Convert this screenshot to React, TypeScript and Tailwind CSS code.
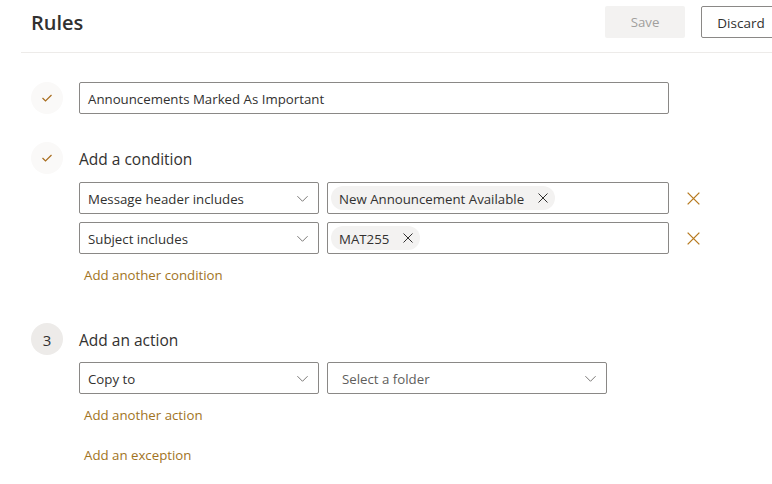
import React from 'react';

const font = { fontFamily: '"Open Sans", "Noto Sans", sans-serif' };

const Check = () => (
  <svg width="12" height="12" viewBox="0 0 12 12" fill="none">
    <path d="M1.5 6 L4.5 9 L10.5 3" stroke="#a86d1e" strokeWidth="1.2" />
  </svg>
);

const Chevron = () => (
  <svg width="13" height="13" viewBox="0 0 14 14" fill="none">
    <path d="M1.5 4.5 L7 10 L12.5 4.5" stroke="#605e5c" strokeWidth="0.9" />
  </svg>
);

const Close = ({ size = 10, color = '#323130' }: { size?: number; color?: string }) => (
  <svg width={size} height={size} viewBox="0 0 10 10" fill="none">
    <path d="M0.5 0.5 L9.5 9.5 M9.5 0.5 L0.5 9.5" stroke={color} strokeWidth="1" />
  </svg>
);

const StepCircle = ({ children, done }: { children: React.ReactNode; done?: boolean }) => (
  <div
    className={`w-8 h-8 rounded-full flex items-center justify-center shrink-0 text-[15px] text-[#323130] ${
      done ? 'bg-[#faf9f8]' : 'bg-[#edebe9] pt-[2px]'
    }`}
  >
    {children}
  </div>
);

const Select = ({ value, width, placeholder }: { value: string; width: string; placeholder?: boolean }) => (
  <div
    className={`${width} h-8 border border-[#8a8886] rounded-[2px] flex items-center justify-between pr-[9px] text-[13.25px] ${
      placeholder ? 'text-[#605e5c] pl-[14px]' : 'text-[#323130] pl-2'
    }`}
  >
    <span className="pt-[3px]">{value}</span>
    <Chevron />
  </div>
);

const Chip = ({ label }: { label: string }) => (
  <div className="h-6 rounded-full bg-[#f3f2f1] flex items-center pl-2 pr-[7px] gap-[14px] text-[13.25px] text-[#323130]">
    <span className="pt-[3px]">{label}</span>
    <Close />
  </div>
);

const ConditionRow = ({ select, chip }: { select: string; chip: string }) => (
  <div className="flex items-center">
    <Select value={select} width="w-[240px]" />
    <div className="ml-2 w-[342px] h-8 border border-[#8a8886] rounded-[2px] flex items-center px-[3px]">
      <Chip label={chip} />
    </div>
    <div className="ml-[17px] w-[14px] flex items-center justify-center">
      <Close size={13} color="#b77a1f" />
    </div>
  </div>
);

const Link = ({ children }: { children: React.ReactNode }) => (
  <div className="h-5 flex items-center pl-[5px] pt-[2px] text-[13.25px] text-[#a1731e]">{children}</div>
);

export default function App() {
  return (
    <div className="w-[772px] h-[484px] overflow-hidden bg-white" style={font}>
      <div className="ml-[21px] w-[760px]">
        <div className="h-[53px] flex items-start pt-[6px] pl-[10px] border-b border-[#edebe9]">
          <h1 className="h-8 flex items-center text-[20px] font-semibold text-[#323130] pt-[1px]">Rules</h1>
          <button className="ml-auto w-20 h-8 bg-[#f3f2f1] text-[13.25px] text-[#a19f9d] rounded-[2px] pt-[2px]">Save</button>
          <button className="ml-4 w-[80px] h-8 border border-[#8a8886] text-[13.5px] font-medium text-[#323130] rounded-[2px] pt-[2px]">
            Discard
          </button>
        </div>

        <div className="pl-[10px] pt-[29px]">
          <div className="flex items-center gap-4">
            <StepCircle done>
              <Check />
            </StepCircle>
            <div className="w-[590px] h-8 border border-[#8a8886] rounded-[2px] flex items-center px-2 pt-[3px] text-[13.25px] text-[#323130]">
              Announcements Marked As Important
            </div>
          </div>

          <div className="mt-7 flex gap-4">
            <StepCircle done>
              <Check />
            </StepCircle>
            <div className="flex flex-col">
              <div className="h-8 flex items-center pt-[3px] text-[15.5px] text-[#323130]">Add a condition</div>
              <div className="mt-2 flex flex-col gap-2">
                <ConditionRow select="Message header includes" chip="New Announcement Available" />
                <ConditionRow select="Subject includes" chip="MAT255" />
              </div>
              <div className="mt-[11px]">
                <Link>Add another condition</Link>
              </div>
            </div>
          </div>

          <div className="mt-[38px] flex gap-4">
            <StepCircle>3</StepCircle>
            <div className="flex flex-col">
              <div className="h-8 flex items-center pt-[3px] text-[15.5px] text-[#323130]">Add an action</div>
              <div className="mt-[7px] flex gap-2">
                <Select value="Copy to" width="w-[240px]" />
                <Select value="Select a folder" width="w-[280px]" placeholder />
              </div>
              <div className="mt-[11px]">
                <Link>Add another action</Link>
              </div>
              <div className="mt-5">
                <Link>Add an exception</Link>
              </div>
            </div>
          </div>
        </div>
      </div>
    </div>
  );
}
